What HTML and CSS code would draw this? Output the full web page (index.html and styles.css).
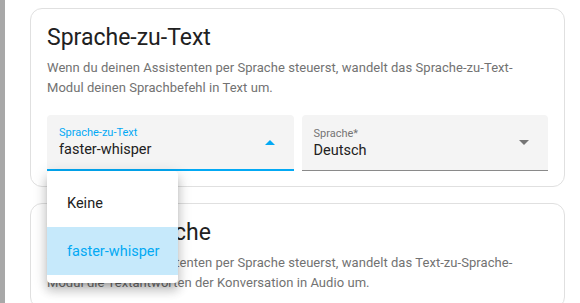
FILE: index.html
```html
<!DOCTYPE html>
<html>
<head>
<title>Sprachassistent</title>
<link rel="stylesheet" href="styles.css">
</head>
<body>
<div class="edge"></div>
<div class="content">
    <div class="card">
        <h2 class="card-title">Sprache-zu-Text</h2>
        <p class="card-desc">Wenn du deinen Assistenten per Sprache steuerst, wandelt das Sprache-zu-Text-Modul deinen Sprachbefehl in Text um.</p>
        <div class="fields">
            <div class="select open">
                <div class="select-text">
                    <span class="select-label">Sprache-zu-Text</span>
                    <span class="select-value">faster-whisper</span>
                </div>
                <span class="arrow up"></span>
                <ul class="menu">
                    <li class="menu-item">Keine</li>
                    <li class="menu-item selected">faster-whisper</li>
                </ul>
            </div>
            <div class="select">
                <div class="select-text">
                    <span class="select-label">Sprache*</span>
                    <span class="select-value">Deutsch</span>
                </div>
                <span class="arrow"></span>
            </div>
        </div>
    </div>
    <div class="card">
        <h2 class="card-title">Text-zu-Sprache</h2>
        <p class="card-desc">Wenn du deinen Assistenten per Sprache steuerst, wandelt das Text-zu-Sprache-Modul die Textantworten der Konversation in Audio um.</p>
    </div>
</div>
</body>
</html>
```

FILE: styles.css
```css
html, body {
    margin: 0;
    padding: 0;
    height: 100%;
    overflow: hidden;
}
body {
    display: flex;
    background-color: #ffffff;
    font-family: Roboto, "Liberation Sans", sans-serif;
    color: #212121;
}
.edge {
    width: 5px;
    flex-shrink: 0;
    background-color: #a8a8a8;
}
.content {
    padding: 8px 0 0 25px;
    width: 535px;
}
.card {
    border: 1px solid #e0e0e0;
    border-radius: 12px;
    background-color: #fff;
    padding: 13px 16px 15px 16px;
    margin-bottom: 16px;
}
.card-title {
    margin: 0;
    font-size: 23px;
    font-weight: 400;
    line-height: 32px;
    color: #212121;
}
.card-desc {
    margin: 4px 0 0 0;
    font-size: 13px;
    line-height: 20px;
    letter-spacing: 0.05px;
    color: #727272;
}
.fields {
    display: flex;
    gap: 8px;
    margin-top: 17px;
}
.select {
    position: relative;
    flex: 1;
    height: 56px;
    box-sizing: border-box;
    display: flex;
    align-items: center;
    background-color: #f4f4f4;
    border-radius: 4px 4px 0 0;
    border-bottom: 1px solid #8a8a8a;
    padding: 0 16px 0 12px;
}
.select.open {
    border-bottom: 2px solid #03a9f4;
}
.select-text {
    flex: 1;
    display: flex;
    flex-direction: column;
    padding-top: 2px;
}
.select-label {
    font-size: 11px;
    line-height: 14px;
    color: #757575;
}
.open .select-label {
    color: #03a9f4;
}
.select-value {
    font-size: 14.5px;
    line-height: 20px;
    color: #212121;
}
.arrow {
    width: 0;
    height: 0;
    border-left: 5px solid transparent;
    border-right: 5px solid transparent;
    border-top: 5px solid #757575;
    margin-right: 3px;
}
.arrow.up {
    border-top: none;
    border-bottom: 5px solid #03a9f4;
}
.menu {
    position: absolute;
    left: 0;
    top: 56px;
    width: 131px;
    margin: 0;
    padding: 8px 0;
    list-style: none;
    background-color: #fff;
    border-radius: 4px;
    box-shadow: 0 5px 5px -3px rgba(0,0,0,0.2), 0 8px 10px 1px rgba(0,0,0,0.14), 0 3px 14px 2px rgba(0,0,0,0.12);
    z-index: 2;
}
.menu-item {
    height: 48px;
    line-height: 50px;
    padding-left: 20px;
    font-size: 14.5px;
    color: #212121;
}
.menu-item.selected {
    background-color: #c6e9fb;
    color: #03a9f4;
}
```
